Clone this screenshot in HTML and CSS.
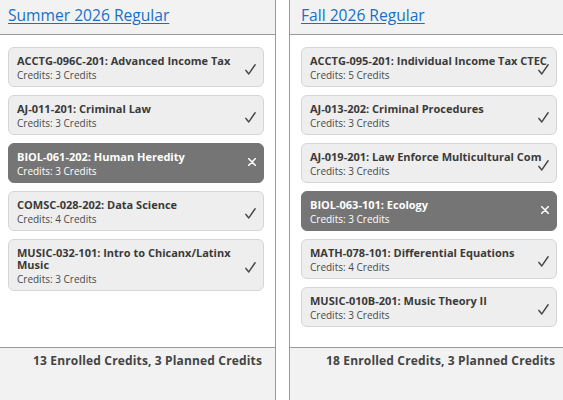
FILE: index.html
```html
<!DOCTYPE html>
<html lang="en">
<head>
<meta charset="utf-8">
<title>Plan</title>
<link rel="stylesheet" href="styles.css">
</head>
<body>
<div class="board">
  <section class="term">
    <header class="term-head"><a class="term-title" href="#">Summer 2026 Regular</a></header>
    <div class="term-body">
      <div class="course">
        <div class="course-title">ACCTG-096C-201: Advanced Income Tax</div>
        <div class="course-credits">Credits: 3 Credits</div>
        <svg class="mark check" viewBox="0 0 11 11"><path d="M0.9 6.4 L3.8 9.9 L10.1 0.8"/></svg>
      </div>
      <div class="course">
        <div class="course-title">AJ-011-201: Criminal Law</div>
        <div class="course-credits">Credits: 3 Credits</div>
        <svg class="mark check" viewBox="0 0 11 11"><path d="M0.9 6.4 L3.8 9.9 L10.1 0.8"/></svg>
      </div>
      <div class="course planned">
        <div class="course-title">BIOL-061-202: Human Heredity</div>
        <div class="course-credits">Credits: 3 Credits</div>
        <svg class="mark close" viewBox="0 0 8 8"><path d="M0.5 0.5 L7.5 7.5 M7.5 0.5 L0.5 7.5"/></svg>
      </div>
      <div class="course">
        <div class="course-title">COMSC-028-202: Data Science</div>
        <div class="course-credits">Credits: 4 Credits</div>
        <svg class="mark check" viewBox="0 0 11 11"><path d="M0.9 6.4 L3.8 9.9 L10.1 0.8"/></svg>
      </div>
      <div class="course">
        <div class="course-title wrap">MUSIC-032-101: Intro to Chicanx/Latinx Music</div>
        <div class="course-credits">Credits: 3 Credits</div>
        <svg class="mark check" viewBox="0 0 11 11"><path d="M0.9 6.4 L3.8 9.9 L10.1 0.8"/></svg>
      </div>
    </div>
    <footer class="term-foot">13 Enrolled Credits, 3 Planned Credits</footer>
  </section>
  <section class="term">
    <header class="term-head"><a class="term-title" href="#">Fall 2026 Regular</a></header>
    <div class="term-body">
      <div class="course">
        <div class="course-title">ACCTG-095-201: Individual Income Tax CTEC</div>
        <div class="course-credits">Credits: 5 Credits</div>
        <svg class="mark check" viewBox="0 0 11 11"><path d="M0.9 6.4 L3.8 9.9 L10.1 0.8"/></svg>
      </div>
      <div class="course">
        <div class="course-title">AJ-013-202: Criminal Procedures</div>
        <div class="course-credits">Credits: 3 Credits</div>
        <svg class="mark check" viewBox="0 0 11 11"><path d="M0.9 6.4 L3.8 9.9 L10.1 0.8"/></svg>
      </div>
      <div class="course">
        <div class="course-title">AJ-019-201: Law Enforce Multicultural Com</div>
        <div class="course-credits">Credits: 3 Credits</div>
        <svg class="mark check" viewBox="0 0 11 11"><path d="M0.9 6.4 L3.8 9.9 L10.1 0.8"/></svg>
      </div>
      <div class="course planned">
        <div class="course-title">BIOL-063-101: Ecology</div>
        <div class="course-credits">Credits: 3 Credits</div>
        <svg class="mark close" viewBox="0 0 8 8"><path d="M0.5 0.5 L7.5 7.5 M7.5 0.5 L0.5 7.5"/></svg>
      </div>
      <div class="course">
        <div class="course-title">MATH-078-101: Differential Equations</div>
        <div class="course-credits">Credits: 4 Credits</div>
        <svg class="mark check" viewBox="0 0 11 11"><path d="M0.9 6.4 L3.8 9.9 L10.1 0.8"/></svg>
      </div>
      <div class="course">
        <div class="course-title">MUSIC-010B-201: Music Theory II</div>
        <div class="course-credits">Credits: 3 Credits</div>
        <svg class="mark check" viewBox="0 0 11 11"><path d="M0.9 6.4 L3.8 9.9 L10.1 0.8"/></svg>
      </div>
    </div>
    <footer class="term-foot">18 Enrolled Credits, 3 Planned Credits</footer>
  </section>
</div>
</body>
</html>
```

FILE: styles.css
```css
html, body {
  margin: 0;
  padding: 0;
  background: #ffffff;
  overflow: hidden;
}

body {
  font-family: "Open Sans", "Noto Sans", sans-serif;
  color: #333333;
  width: 563px;
  height: 400px;
}

.board {
  display: flex;
  gap: 13px;
  margin-left: -4px;
  height: 400px;
}

.term {
  flex: 0 0 280px;
  box-sizing: border-box;
  border-left: 1px solid #9a9a9a;
  border-right: 1px solid #9a9a9a;
  display: flex;
  flex-direction: column;
  height: 400px;
}

.term-head {
  box-sizing: border-box;
  height: 35px;
  padding: 4px 11px 0 11px;
  background: #f2f2f2;
  border-bottom: 1px solid #9a9a9a;
}

.term-title {
  font-size: 15.6px;
  line-height: 22px;
  color: #1570c8;
  text-decoration: underline;
  text-underline-offset: 2px;
}

.term-body {
  flex: 1;
  display: flex;
  flex-direction: column;
  gap: 8px;
  padding: 12px 11px;
}

.course {
  position: relative;
  box-sizing: border-box;
  width: 256px;
  background: #eeeeee;
  border: 1px solid #d5d5d5;
  border-radius: 6px;
  padding: 7px 22px 4px 8px;
}

.course-title {
  font-size: 11px;
  line-height: 12px;
  font-weight: 700;
  color: #3a3a3a;
  white-space: nowrap;
}

.course-title.wrap {
  white-space: normal;
  width: 226px;
}

.course-credits {
  margin-top: 1px;
  font-size: 10px;
  line-height: 14px;
  color: #4a4a4a;
}

.planned {
  background: #757575;
  border-color: #757575;
}

.planned .course-title,
.planned .course-credits {
  color: #ffffff;
}

.mark {
  position: absolute;
  fill: none;
  stroke-linecap: round;
  stroke-linejoin: round;
}

.check {
  right: 7px;
  top: 50%;
  width: 11px;
  height: 11px;
  margin-top: -3px;
  stroke: #4a4a4a;
  stroke-width: 1.5;
}

.close {
  right: 7px;
  top: 50%;
  width: 8px;
  height: 8px;
  margin-top: -5px;
  stroke: #ffffff;
  stroke-width: 1.5;
}

.term-foot {
  box-sizing: border-box;
  height: 53px;
  padding: 5px 13px 0 0;
  background: #f2f2f2;
  border-top: 1px solid #9a9a9a;
  text-align: right;
  font-size: 12px;
  line-height: 16px;
  font-weight: 700;
  letter-spacing: 0.15px;
  color: #444444;
}
```
